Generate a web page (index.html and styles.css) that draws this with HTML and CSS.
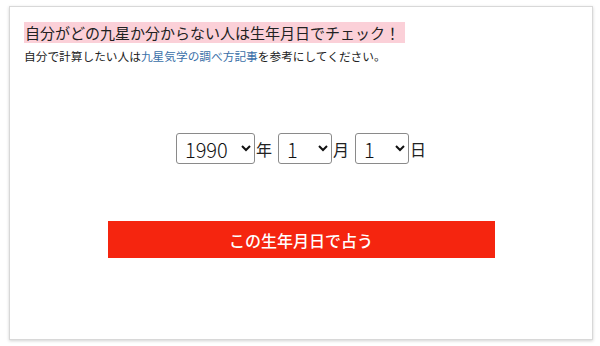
FILE: index.html
```html
<!DOCTYPE html>
<html lang="ja">
  <head>
    <meta charset="UTF-8" />
    <meta name="viewport" content="width=device-width, initial-scale=1.0" />
    <title>九星チェック</title>
    <link rel="stylesheet" href="styles.css">
  </head>
  <body>
    <div class="card">
      <h2 class="title"><span>自分がどの九星か分からない人は生年月日でチェック！</span></h2>
      <p class="note">自分で計算したい人は<a href="#">九星気学の調べ方記事</a>を参考にしてください。</p>

      <form class="birth-form">
        <div class="date-row">
          <select class="year">
            <option>1990</option>
          </select><span class="unit">年</span>
          <select class="month">
            <option>1</option>
          </select><span class="unit">月</span>
          <select class="day">
            <option>1</option>
          </select><span class="unit">日</span>
        </div>
        <button type="button" class="submit-btn">この生年月日で占う</button>
      </form>
    </div>
  </body>
</html>
```

FILE: styles.css
```css
* {
    box-sizing: border-box;
}

body {
    margin: 0;
    padding: 6px 7px 6px 9px;
    background: #fff;
    font-family: "Noto Sans CJK JP", "Noto Sans", sans-serif;
    color: #222;
}

.card {
    height: 334px;
    border: 1px solid #d8d8d8;
    box-shadow: 0 1px 3px rgba(0, 0, 0, 0.18);
    padding: 17px 14px 0;
}

.title {
    margin: 0;
    font-size: 15px;
    font-weight: normal;
    line-height: 18px;
}

.title span {
    background: #fbd0d8;
    padding: 0 5px 0 1px;
}

.note {
    margin: 6px 0 0;
    font-size: 11.7px;
    line-height: 16px;
}

.note a {
    color: #3a6fa8;
    text-decoration: none;
}

.birth-form {
    display: flex;
    flex-direction: column;
    align-items: center;
    margin-top: 69px;
}

.date-row {
    display: flex;
    align-items: center;
}

.date-row select {
    height: 31px;
    font-size: 20px;
    font-family: "Noto Sans CJK JP", sans-serif;
    font-weight: 300;
    color: #111;
    background: #fff;
    border: 1px solid #8a8a8a;
    border-radius: 3px;
    padding: 0 4px;
}

.year {
    width: 79px;
}

.month,
.day {
    width: 54px;
}

.unit {
    font-size: 16px;
    margin: 0 6px 0 1px;
}

.unit:last-child {
    margin-right: 0;
}

.submit-btn {
    margin-top: 57px;
    width: 387px;
    height: 37px;
    border: none;
    background: #f5250f;
    color: #fff;
    font-family: "Noto Sans CJK JP", sans-serif;
    font-size: 16px;
    font-weight: 500;
    cursor: pointer;
}
```
